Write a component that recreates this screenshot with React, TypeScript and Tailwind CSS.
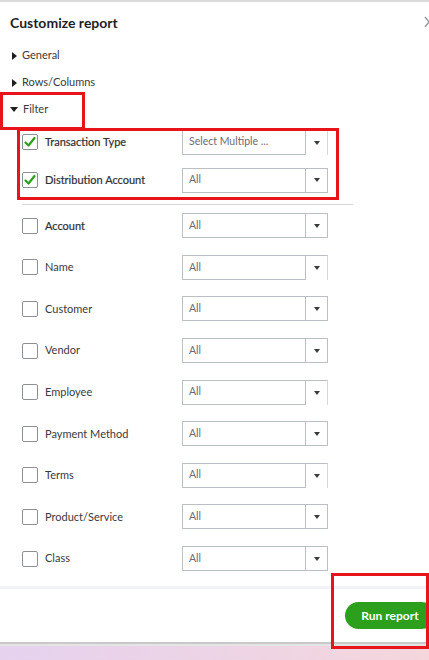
import React from 'react';

type FilterRow = {
  label: string;
  value?: string;
  checked?: boolean;
  strong?: boolean;
  // some selects are drawn without the bottom edge on the arrow part
  partial?: boolean;
};

const ACTIVE: FilterRow[] = [
  { label: 'Transaction Type', value: 'Select Multiple ...', checked: true, strong: true, partial: true },
  { label: 'Distribution Account', checked: true, strong: true },
];

const FILTERS: FilterRow[] = [
  { label: 'Account', strong: true },
  { label: 'Name', partial: true },
  { label: 'Customer' },
  { label: 'Vendor' },
  { label: 'Employee', partial: true },
  { label: 'Payment Method' },
  { label: 'Terms', partial: true },
  { label: 'Product/Service' },
  { label: 'Class' },
];

function Caret({ open }: { open?: boolean }) {
  if (open) {
    return (
      <svg width="8" height="5" viewBox="0 0 8 5" className="mr-[5px]">
        <polygon points="0,0 8,0 4,5" fill="#1f1f1f" />
      </svg>
    );
  }
  return (
    <svg width="5" height="8" viewBox="0 0 5 8" className="ml-[2px] mr-[5px]">
      <polygon points="0,0 5,4 0,8" fill="#1f1f1f" />
    </svg>
  );
}

function Checkbox({ checked }: { checked?: boolean }) {
  return (
    <div className="w-[16px] h-[16px] shrink-0 border border-[#8d9096] rounded-[2px] bg-white flex items-center justify-center">
      {checked && (
        <svg width="14" height="14" viewBox="0 0 14 14">
          <path d="M2.5 7.5 L5.5 10.5 L11.5 3" stroke="#2ca01c" strokeWidth="2.2" fill="none" strokeLinecap="round" strokeLinejoin="round" />
        </svg>
      )}
    </div>
  );
}

function Select({ value = 'All', partial }: { value?: string; partial?: boolean }) {
  return (
    <div className="flex h-[25px] w-[146px]">
      <div className="w-[124px] h-full border border-[#babec5] flex items-center pl-[6px] text-[10.5px] text-[#6b6c72]">
        {value}
      </div>
      <div
        className={
          partial
            ? 'w-[22px] h-full border-t border-r border-t-[#babec5] border-r-[#d6d8dc] flex items-center justify-center'
            : 'w-[22px] h-full border-t border-b border-r border-[#babec5] flex items-center justify-center'
        }
      >
        <svg width="6" height="4" viewBox="0 0 6 4">
          <polygon points="0,0 6,0 3,4" fill="#393a3d" />
        </svg>
      </div>
    </div>
  );
}

function Row({ row, height }: { row: FilterRow; height: string }) {
  return (
    <div className={`flex items-center pl-[22px] ${height}`}>
      <Checkbox checked={row.checked} />
      <span
        className={
          row.strong
            ? 'ml-[7px] w-[137px] text-[11px] text-[#2f3033] [-webkit-text-stroke:0.2px_#2f3033]'
            : 'ml-[7px] w-[137px] text-[11px] text-[#393a3d]'
        }
      >
        {row.label}
      </span>
      <Select value={row.value} partial={row.partial} />
    </div>
  );
}

export default function App() {
  return (
    <div className="relative w-[429px] h-[660px] overflow-hidden bg-gradient-to-r from-[#e6d2ef] to-[#f4d6dc] font-['Lato',sans-serif]">
      <div className="w-[445px] bg-white border-t-2 border-[#dadada]">
        {/* header */}
        <div className="h-[40px] flex items-center justify-between pl-[10px] pr-[11px]">
          <h2 className="text-[14px] font-bold text-[#1f1f1f]">Customize report</h2>
          <svg width="10" height="12" viewBox="0 0 10 12">
            <path d="M1 1 L9 11 M9 1 L1 11" stroke="#8d9096" strokeWidth="1.3" fill="none" />
          </svg>
        </div>

        {/* sections */}
        <div className="h-[27px] flex items-center pl-[10px] text-[11px] text-[#393a3d]">
          <Caret />
          General
        </div>
        <div className="h-[27px] flex items-center pl-[10px] text-[11px] text-[#393a3d]">
          <Caret />
          Rows/Columns
        </div>
        <div className="h-[27px] flex items-center pl-[10px] text-[11px] text-[#393a3d]">
          <Caret open />
          Filter
        </div>

        {/* active filters */}
        {ACTIVE.map((row) => (
          <Row key={row.label} row={row} height="h-[38px]" />
        ))}
        <div className="mt-[5px] ml-[22px] w-[331px] border-t border-[#d4d7dc]" />

        {FILTERS.map((row) => (
          <Row key={row.label} row={row} height="h-[41.6px]" />
        ))}

        {/* footer */}
        <div className="mt-[7px] border-t-[3px] border-[#f2f3f6] h-[56px] flex items-center justify-end pr-[10px]">
          <button className="w-[90px] h-[27px] rounded-full bg-[#2ca01c] text-white text-[12px] font-bold">
            Run report
          </button>
        </div>
        <div className="border-b-2 border-[#c8c8c8]" />
        <div className="h-[2px] bg-[#e4e4e4]" />
      </div>

      {/* red annotation boxes */}
      <div className="absolute left-0 top-[92px] w-[85px] h-[38px] border-[3px] border-[#e8141b]" />
      <div className="absolute left-[17px] top-[128px] w-[322px] h-[72px] border-[3px] border-[#e8141b]" />
      <div className="absolute left-[331px] top-[573px] w-[98px] h-[76px] border-[3px] border-[#e8141b]" />
    </div>
  );
}
